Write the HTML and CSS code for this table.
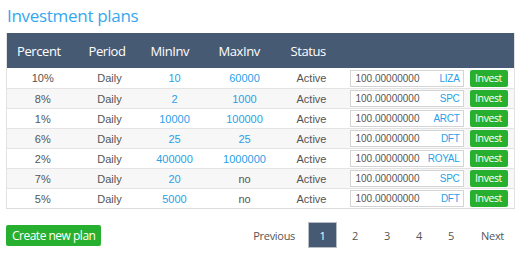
FILE: index.html
```html
<!DOCTYPE html>
<html>
<head>
<meta charset="utf-8">
<link rel="stylesheet" href="styles.css">
</head>
<body>
<div class="page">
  <h1 class="title">Investment plans</h1>
  <table class="plans">
    <colgroup>
      <col class="c1"><col class="c2"><col class="c3"><col class="c4"><col class="c5"><col class="c6">
    </colgroup>
    <thead>
      <tr><th>Percent</th><th>Period</th><th>MinInv</th><th>MaxInv</th><th>Status</th><th></th></tr>
    </thead>
    <tbody>
      <tr><td>10%</td><td>Daily</td><td class="blue">10</td><td class="blue">60000</td><td>Active</td><td class="act"><div class="field"><span>100.00000000</span><span class="cur">LIZA</span></div><button class="btn">Invest</button></td></tr>
      <tr><td>8%</td><td>Daily</td><td class="blue">2</td><td class="blue">1000</td><td>Active</td><td class="act"><div class="field"><span>100.00000000</span><span class="cur">SPC</span></div><button class="btn">Invest</button></td></tr>
      <tr><td>1%</td><td>Daily</td><td class="blue">10000</td><td class="blue">100000</td><td>Active</td><td class="act"><div class="field"><span>100.00000000</span><span class="cur">ARCT</span></div><button class="btn">Invest</button></td></tr>
      <tr><td>6%</td><td>Daily</td><td class="blue">25</td><td class="blue">25</td><td>Active</td><td class="act"><div class="field"><span>100.00000000</span><span class="cur">DFT</span></div><button class="btn">Invest</button></td></tr>
      <tr><td>2%</td><td>Daily</td><td class="blue">400000</td><td class="blue">1000000</td><td>Active</td><td class="act"><div class="field"><span>100.00000000</span><span class="cur">ROYAL</span></div><button class="btn">Invest</button></td></tr>
      <tr><td>7%</td><td>Daily</td><td class="blue">20</td><td>no</td><td>Active</td><td class="act"><div class="field"><span>100.00000000</span><span class="cur">SPC</span></div><button class="btn">Invest</button></td></tr>
      <tr><td>5%</td><td>Daily</td><td class="blue">5000</td><td>no</td><td>Active</td><td class="act"><div class="field"><span>100.00000000</span><span class="cur">DFT</span></div><button class="btn">Invest</button></td></tr>
    </tbody>
  </table>
  <div class="footer">
    <button class="create">Create new plan</button>
    <nav class="pager">
      <span class="pg prev">Previous</span>
      <span class="pg cur-page">1</span>
      <span class="pg">2</span>
      <span class="pg">3</span>
      <span class="pg">4</span>
      <span class="pg">5</span>
      <span class="pg next">Next</span>
    </nav>
  </div>
</div>
</body>
</html>
```

FILE: styles.css
```css
html, body { margin: 0; padding: 0; background: #fff; }
.page { width: 509px; padding: 6px 0 0 6px; font-family: "Open Sans", "Noto Sans", sans-serif; }
.title { margin: 0 0 7px 1px; font-weight: 400; font-size: 17px; line-height: 20px; color: #35a8ef; letter-spacing: -0.3px; }
.plans { width: 508px; border-collapse: collapse; border-left: 1px solid #e2e2e2; border-right: 1px solid #e2e2e2; border-bottom: 1px solid #dcdcdc; table-layout: fixed; }
.c1 { width: 72px; } .c2 { width: 62px; } .c3 { width: 68px; } .c4 { width: 72px; } .c5 { width: 62px; } .c6 { width: 172px; }
.plans thead tr { background: #475a74; height: 35px; }
.plans th { color: #fff; font-weight: 400; font-size: 13px; text-align: left; padding: 0 0 0 10px; letter-spacing: -0.4px; }
.plans td { height: 19px; padding: 0; border-top: 1px solid #e3e3e3; text-align: center; font-family: "Liberation Sans", Arial, sans-serif; font-size: 11px; color: #555; }
.plans tbody tr:first-child td { border-top: none; height: 20px; }
.plans tbody tr:nth-child(even) { background: #f7f7f7; }
.plans td.blue { color: #2a9fe8; }
.plans td.act { text-align: left; }
.field { display: inline-flex; vertical-align: middle; justify-content: space-between; align-items: center; box-sizing: border-box; width: 114px; height: 17px; margin-left: 7px; padding: 0 3px 0 5px; border: 1px solid #d4d4d4; background: #fff; font-size: 10px; color: #555; }
.field .cur { color: #2a9fe8; font-size: 10px; letter-spacing: -0.3px; }
.btn { vertical-align: middle; margin-left: 6px; width: 38px; height: 17px; padding: 0; border: none; border-radius: 2px; background: #27b02f; color: #fff; font-family: "Open Sans", "Noto Sans", sans-serif; font-size: 10.5px; letter-spacing: -0.4px; line-height: 17px; }
.footer { display: flex; justify-content: space-between; align-items: center; margin-top: 13px; }
.create { height: 21px; margin-top: 1px; padding: 0 6px; border: none; border-radius: 2px; background: #27b02f; color: #fff; font-family: "Open Sans", "Noto Sans", sans-serif; font-size: 12px; letter-spacing: -0.5px; }
.pager { display: flex; align-items: center; }
.pg { display: flex; align-items: center; justify-content: center; width: 32px; height: 26px; font-size: 11px; color: #555; letter-spacing: -0.3px; }
.pg.prev { width: auto; padding: 0 13px 0 0; }
.pg.next { width: auto; padding: 0 11px 0 14px; }
.pg.cur-page { box-sizing: border-box; width: 29px; background: #475a74; border: 1px solid #b8bcc4; color: #fff; margin-right: 2px; }
```
